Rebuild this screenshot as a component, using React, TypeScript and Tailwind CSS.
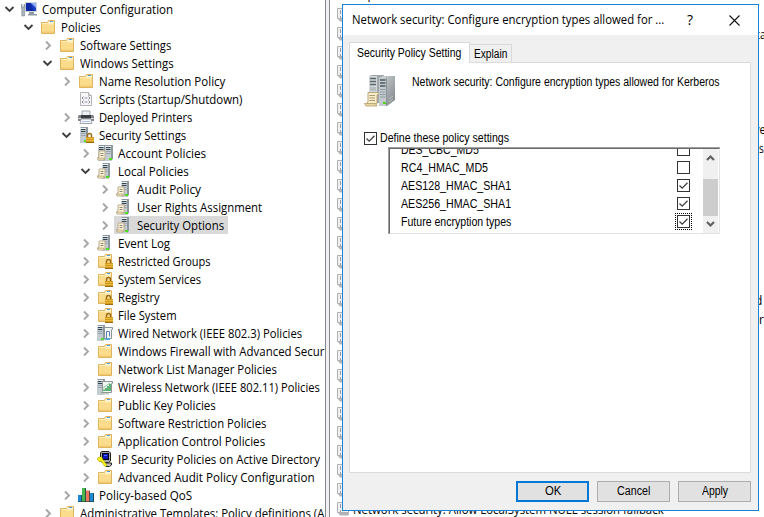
import React, { useLayoutEffect, useRef, useState } from "react";

/** Single-line label condensed or widened horizontally so that it spans `w` pixels. */
function Label({ text, w, className = "" }: { text: string; w: number; className?: string }) {
  const ref = useRef<HTMLSpanElement>(null);
  const [scale, setScale] = useState(1);
  useLayoutEffect(() => {
    if (ref.current) setScale(w / ref.current.offsetWidth);
  }, [text, w]);
  return (
    <span className={`block shrink-0 ${className}`} style={{ width: w }}>
      <span ref={ref} className="inline-block origin-left whitespace-pre" style={{ transform: `scaleX(${scale})` }}>
        {text}
      </span>
    </span>
  );
}

type IconName =
  | "computer" | "folder" | "script" | "printer" | "serverLock" | "serverPair" | "server"
  | "folderLock" | "wired" | "wireless" | "ipsec" | "qos";

const Padlock = () => (
  <g>
    <path d="M9.5 11V8.5a2 2 0 0 1 4 0V11" fill="none" stroke="#9a6c1c" strokeWidth="1.5" />
    <rect x="8" y="10" width="8" height="6" fill="#cf9a1c" />
    <path d="M8 11.5h8M8 13.5h8" stroke="#e9b93e" strokeWidth="1" />
    <path d="M8 15.5h8" stroke="#9d6c0c" strokeWidth="1" />
  </g>
);

const FolderShape = () => (
  <g>
    <path d="M1.5 3.5h6l1-2h6v13h-13z" fill="#fbdc8c" stroke="#dfb45c" />
    <path d="M8.500 2.500h5.500v2H8z" fill="#fff7dc" />
    <rect x="10" y="2" width="3" height="1" fill="#4f9edb" />
    <path d="M2 4.500h5.500l1 .500H14" fill="none" stroke="#fff0bf" />
    <path d="M2 12.500h12v1.500H2z" fill="#f4cb72" />
  </g>
);

const Tower = ({ x = 5 }: { x?: number }) => (
  <g transform={`translate(${x} 0)`}>
    <path d="M0 1l1-1h7v14l-2 2H0z" fill="#8e999f" />
    <path d="M0 1h6v15H0z" fill="#c3ccd1" />
    <path d="M0 1.500h6" stroke="#eef3f5" />
    <path d="M1 2.500h4.500M1 4.500h4.500" stroke="#37434b" />
    <path d="M1 6.500h4.500M1 8.500h4.500" stroke="#98a4ab" />
    <rect x="4" y="13" width="3" height="2" fill="#4be01c" />
  </g>
);

const Scroll = () => (
  <g>
    <path d="M2 6h6v8H1v-2h1z" fill="#fff3d8" stroke="#b5a688" strokeWidth=".9" />
    <path d="M3.500 8.500h3M3.500 10.500h3" stroke="#8b8878" />
    <path d="M.500 13h6l1 2H1z" fill="#f2e3b8" stroke="#a99b77" strokeWidth=".7" />
  </g>
);

function Icon({ name }: { name: IconName }) {
  return (
    <svg width="16" height="16" viewBox="0 0 16 16" className="shrink-0">
      {name === "folder" && <FolderShape />}
      {name === "folderLock" && (<><FolderShape /><Padlock /></>)}
      {name === "computer" && (
        <g>
          <rect x="4.500" y="1.500" width="11" height="9" fill="#1d3fc4" stroke="#cdd4da" />
          <path d="M10 2h5v5z" fill="#8fb0f6" />
          <path d="M5 2h4l4 8H5z" fill="#0d28a4" />
          <path d="M8 11h5v2h3v1.500H7v-1.500h1z" fill="#8e99a1" />
          <path d="M0 4l1-1v3h2V3l1 1v3L3.500 8v7H.800V8L0 7z" fill="#aab5bc" stroke="#6c7980" strokeWidth=".5" />
        </g>
      )}
      {name === "script" && (
        <g>
          <path d="M2.500 1.500h8l3 3v10h-11z" fill="#f7f7f8" stroke="#b3b3b8" />
          <path d="M10.500 1.500v3h3" fill="#ddd" stroke="#b3b3b8" />
          <path d="M5.500 5.500l-1.500 1.500 1.500 1.500M10.500 5.500l1.500 1.500-1.500 1.500M5.500 9.500l-1.500 1.500 1.500 1.500M10.500 9.500l1.500 1.500-1.500 1.500" fill="none" stroke="#66666e" strokeWidth=".8" />
          <path d="M6.500 7h3M6.500 11h3" stroke="#7b6fa0" strokeWidth=".8" />
        </g>
      )}
      {name === "printer" && (
        <g>
          <path d="M4 2h8v5H4z" fill="#eef2f5" stroke="#8e949a" strokeWidth=".8" />
          <path d="M1 6h14l1 1v5H0V7z" fill="#808388" />
          <path d="M3 6h10v3H3z" fill="#3a3d41" />
          <path d="M0 9.500h3M13 9.500h3" stroke="#d0d3d6" />
          <path d="M3 10h10l1 4.500H2z" fill="#f5f7fa" stroke="#8d9298" strokeWidth=".8" />
          <path d="M4 12.500h8" stroke="#a9c6ee" />
        </g>
      )}
      {name === "serverLock" && (<><Tower x={2} /><Padlock /></>)}
      {name === "serverPair" && (<><Tower x={1} /><Tower x={8} /><Scroll /></>)}
      {name === "server" && (<><Tower x={5} /><Scroll /></>)}
      {name === "wired" && (
        <g>
          <Tower x={0} />
          <path d="M5.500 2.500h10v2h-1v9h-8l1-1v-9z" fill="#f4f6f4" stroke="#8f9698" />
          <path d="M9.500 13V6.500h3v5" fill="none" stroke="#5d7fae" />
          <path d="M8 13h5v2H8z" fill="#56a8d8" />
        </g>
      )}
      {name === "wireless" && (
        <g>
          <Tower x={0} />
          <path d="M4.500 2.500h11v2h-1v9h-10l1-1v-9z" fill="#f2f6f2" stroke="#8f9698" />
          <path d="M7 12V10.500M9 12V9M11 12V7M13 12V5" stroke="#2b9b4c" strokeWidth="1.500" />
          <path d="M6 9l7-5" stroke="#6fbf87" strokeWidth=".8" />
          <path d="M3 14h9v1.500H3z" fill="#c3cbc6" />
        </g>
      )}
      {name === "ipsec" && (
        <g>
          <path d="M3.500 1.500l1.500-1h7l1.500 1.500v8l-2 1.500H5L3.500 10z" fill="#a7a7b0" stroke="#222" />
          <rect x="5.500" y="2.500" width="6" height="6" fill="#0a17b8" stroke="#000" />
          <path d="M7 4.500h3" stroke="#4e75ff" />
          <path d="M8 12h6.500v2l-2 1.500H9z" fill="#bdbdbd" stroke="#222" />
          <path d="M0 8l2-2h3l.500 2 4.500 6-1 1.500-1.500-.500-3.500-5-1.500 1z" fill="#f6ef12" stroke="#a19b00" strokeWidth=".5" />
        </g>
      )}
      {name === "qos" && (
        <g>
          <path d="M0 8h4v7H0z" fill="#1f8ad4" />
          <path d="M4 1h4v14H4z" fill="#49b54a" />
          <path d="M8 3.500h4V15H8z" fill="#f0745e" />
          <path d="M12 6h4v9h-4z" fill="#1f8ad4" />
          <path d="M3.500 8v7M7.500 1v14M11.500 4v11M15.500 6v9" stroke="#163a3c" strokeOpacity=".75" />
          <path d="M0 14.500h16" stroke="#163a3c" strokeOpacity=".6" />
        </g>
      )}
    </svg>
  );
}

type Row = { d: number; icon: IconName; text: string; w: number; open?: boolean; leaf?: boolean; selected?: boolean };

const rows: Row[] = [
  { d: 0, icon: "computer", text: "Computer Configuration", w: 131, open: true },
  { d: 1, icon: "folder", text: "Policies", w: 40, open: true },
  { d: 2, icon: "folder", text: "Software Settings", w: 91 },
  { d: 2, icon: "folder", text: "Windows Settings", w: 94, open: true },
  { d: 3, icon: "folder", text: "Name Resolution Policy", w: 126 },
  { d: 3, icon: "script", text: "Scripts (Startup/Shutdown)", w: 143, leaf: true },
  { d: 3, icon: "printer", text: "Deployed Printers", w: 93 },
  { d: 3, icon: "serverLock", text: "Security Settings", w: 87, open: true },
  { d: 4, icon: "serverPair", text: "Account Policies", w: 88 },
  { d: 4, icon: "server", text: "Local Policies", w: 71, open: true },
  { d: 5, icon: "server", text: "Audit Policy", w: 64 },
  { d: 5, icon: "server", text: "User Rights Assignment", w: 125 },
  { d: 5, icon: "server", text: "Security Options", w: 87, selected: true },
  { d: 4, icon: "server", text: "Event Log", w: 52 },
  { d: 4, icon: "folderLock", text: "Restricted Groups", w: 93 },
  { d: 4, icon: "folderLock", text: "System Services", w: 83 },
  { d: 4, icon: "folderLock", text: "Registry", w: 42 },
  { d: 4, icon: "folderLock", text: "File System", w: 59 },
  { d: 4, icon: "wired", text: "Wired Network (IEEE 802.3) Policies", w: 184 },
  { d: 4, icon: "folder", text: "Windows Firewall with Advanced Secur", w: 206 },
  { d: 4, icon: "folder", text: "Network List Manager Policies", w: 159, leaf: true },
  { d: 4, icon: "wireless", text: "Wireless Network (IEEE 802.11) Policies", w: 202 },
  { d: 4, icon: "folder", text: "Public Key Policies", w: 98 },
  { d: 4, icon: "folder", text: "Software Restriction Policies", w: 148 },
  { d: 4, icon: "folder", text: "Application Control Policies", w: 147 },
  { d: 4, icon: "ipsec", text: "IP Security Policies on Active Directory", w: 202 },
  { d: 4, icon: "folder", text: "Advanced Audit Policy Configuration", w: 197 },
  { d: 3, icon: "qos", text: "Policy-based QoS", w: 93 },
  { d: 2, icon: "folder", text: "Administrative Templates: Policy definitions (A", w: 244 },
];

function Twisty({ open, leaf }: { open?: boolean; leaf?: boolean }) {
  return (
    <svg width="11" height="10" viewBox="0 0 11 10" className="mr-1.5 shrink-0">
      {!leaf && (open
        ? <path d="M1.500 3l4 4 4-4" fill="none" stroke="#404040" strokeWidth="1.900" />
        : <path d="M4 1.500l4 4-4 4" fill="none" stroke="#a6a6a6" strokeWidth="1.900" />)}
    </svg>
  );
}

const Tree = () => (
  <div className="w-[325px] shrink-0 overflow-hidden bg-white">
    {rows.map((r) => (
      <div key={r.text} className="flex h-[18px] items-center pl-1">
        {Array.from({ length: r.d }, (_, i) => <span key={i} className="w-[19px] shrink-0" />)}
        <Twisty open={r.open} leaf={r.leaf} />
        <div className={`flex h-[18px] shrink-0 items-center pr-1 ${r.selected ? "-ml-0.5 bg-[#d9d9d9] pl-0.5" : ""}`}>
          <Icon name={r.icon} />
          <Label text={r.text} w={r.w} className="ml-[5px] h-5 pt-0.5 leading-[18px]" />
        </div>
      </div>
    ))}
  </div>
);

const listText: Record<number, { text: string; w: number; indent: string }> = {
  1: { text: "ta", w: 10, indent: "ml-[406px]" },
  6: { text: "ve", w: 12, indent: "ml-[404px]" },
  7: { text: "s", w: 5, indent: "ml-[409px]" },
  15: { text: "d", w: 7, indent: "ml-[405px]" },
  16: { text: "r", w: 5, indent: "ml-[409px]" },
  26: { text: "Network security: Allow LocalSystem NULL session fallback", w: 311, indent: "ml-[3px]" },
};

const PolicyList = () => (
  <div className="flex-1 overflow-hidden bg-white pl-[7px]">
    <div className="h-[5px] overflow-hidden pl-4">
      <div className="-mt-[15px] leading-[19px]">Imp</div>
    </div>
    {Array.from({ length: 27 }, (_, i) => {
      const t = listText[i];
      return (
        <div key={i} className="flex h-[19px] items-center">
          <svg width="13" height="14" viewBox="0 0 13 14" className="shrink-0">
            <path d="M.5.500h11v10H.500z" fill="#f1f1f3" stroke="#b0b0b4" />
            <path d="M3.500 2v4M3.500 8v2M6 2.500h3v3H6zM6 7.500h3" fill="none" stroke="#9c9ca2" />
            <path d="M1 11h11v1.500l-1 1H3z" fill="#b4b4b8" />
          </svg>
          {t && <Label text={t.text} w={t.w} className={`h-5 pt-0.5 leading-[18px] ${t.indent}`} />}
        </div>
      );
    })}
  </div>
);

const Check = ({ on = false }: { on?: boolean }) => (
  <svg width="13" height="13" viewBox="0 0 13 13" className="shrink-0">
    <rect x=".5" y=".5" width="12" height="12" fill="#fff" stroke="#333" />
    {on && <path d="M2.500 6.500l2.700 2.700 5.300-5.400" fill="none" stroke="#404040" strokeWidth="1.300" />}
  </svg>
);

const BigServer = () => (
  <svg width="32" height="32" viewBox="0 0 32 32" className="shrink-0">
    <defs>
      <linearGradient id="side" x1="0" y1="0" x2="1" y2="1">
        <stop offset="0" stopColor="#d5d9db" />
        <stop offset="1" stopColor="#7b8286" />
      </linearGradient>
    </defs>
    <path d="M5 1l3-1h12v25l-4 3H5z" fill="#9fa7ab" />
    <path d="M5 1h8v26H5z" fill="#d3d9db" />
    <path d="M6 3.500h6M6 6.500h6M6 9.500h6" stroke="#5c676d" strokeWidth="1.400" />
    <path d="M6 13h6M6 15h6" stroke="#9ba5aa" />
    <path d="M15 3l4-2h12v24l-8 6h-8z" fill="url(#side)" />
    <path d="M15 3h7v28h-7z" fill="#c3cbce" />
    <path d="M16 5h5.500M16 8h5.500M16 11h5.500" stroke="#4f5b61" strokeWidth="1.500" />
    <path d="M16 14.500h5.500M16 17h5.500M16 19.500h5.500M16 22h5.500" stroke="#909ca2" />
    <path d="M22.500 3v28" stroke="#8a9397" />
    <path d="M25 24l4-3M25 27l4-3" stroke="#bcc2c5" />
    <path d="M19 27h3v2h-3z" fill="#50d41e" />
    <path d="M4 17.500h9.500l1.500 1.500-2 1v9H2l2-2z" fill="#f9edc8" stroke="#b9a77e" />
    <path d="M5.500 20.500H11M5.500 23H11M5.500 25.500H11" stroke="#a89a75" />
    <path d="M.5 28.500h11l1.500 2.500H2z" fill="#ead6a1" stroke="#b29e70" strokeWidth=".8" />
  </svg>
);

const options = [
  { text: "DES_CBC_MD5", w: 78, on: false },
  { text: "RC4_HMAC_MD5", w: 87, on: false },
  { text: "AES128_HMAC_SHA1", w: 110, on: true },
  { text: "AES256_HMAC_SHA1", w: 110, on: true },
  { text: "Future encryption types", w: 110, on: true, focus: true },
];

const Arrow = ({ down = false }: { down?: boolean }) => (
  <svg width="15" height="17" viewBox="0 0 15 17" className={`shrink-0 ${down ? "rotate-180" : ""}`}>
    <path d="M4 11l3.500-3.500L11 11" fill="none" stroke="#606060" strokeWidth="2.200" />
  </svg>
);

const DialogButton = ({ text, w, primary = false }: { text: string; w: number; primary?: boolean }) => (
  <button className={`flex h-[21px] w-[73px] items-center justify-center bg-[#e1e1e1] ${primary ? "border-2 border-[#0078d7]" : "border border-[#adadad]"}`}>
    <Label text={text} w={w} className="text-left leading-[17px]" />
  </button>
);

const Dialog = () => (
  <div className="absolute left-[342px] top-1 flex h-[507px] w-[417px] flex-col border border-[#1883d7] bg-[#f0f0f0]">
    <div className="flex h-[30px] shrink-0 items-center bg-white pl-[9px] font-['Open_Sans','Noto_Sans',sans-serif]">
      <Label text="Network security: Configure encryption types allowed for ..." w={312} />
      <span className="ml-[22px] w-2 text-center text-[14px] leading-[18px]">?</span>
      <svg width="11" height="11" viewBox="0 0 11 11" className="ml-[35px]">
        <path d="M.5.500l10 10M10.500.500l-10 10" stroke="#111" strokeWidth="1.100" />
      </svg>
    </div>
    <div className="flex h-[27px] shrink-0 items-end pl-1.5 pt-[7px]">
      <div className="z-10 -mb-px flex h-[21px] w-[121px] items-center border border-b-0 border-[#d9d9d9] bg-white pl-[7px]">
        <Label text="Security Policy Setting" w={104} className="leading-[18px]" />
      </div>
      <div className="-ml-px flex h-[18px] w-[43px] items-center border border-b-0 border-[#d9d9d9] pl-1">
        <Label text="Explain" w={33} className="leading-4" />
      </div>
    </div>
    <div className="mx-1.5 mr-[7px] h-[411px] shrink-0 border border-[#dcdcdc] bg-white pl-3.5">
      <div className="flex h-[69px] pt-3">
        <BigServer />
        <Label text="Network security: Configure encryption types allowed for Kerberos" w={308} className="ml-4 h-4 leading-[14px]" />
      </div>
      <div className="flex h-[13px] items-center">
        <Check on />
        <Label text="Define these policy settings" w={129} className="ml-[3px] leading-[13px]" />
      </div>
      <div className="ml-6 mt-0.5 h-[87px] w-[332px] border-l border-t border-[#a0a0a0]">
        <div className="flex h-[86px] border border-b-[#e3e3e3] border-l-[#696969] border-r-[#e3e3e3] border-t-[#696969]">
          <div className="flex h-[84px] flex-1 flex-col justify-end overflow-hidden pb-0.5 pl-[11px]">
            {options.map((o) => (
              <div key={o.text} className="flex h-[18px] shrink-0 items-start justify-between pr-[11px]">
                <Label text={o.text} w={o.w} className="leading-[18px]" />
                <span className={`flex h-[17px] w-[17px] items-center justify-center ${o.focus ? "border border-dotted border-black" : ""}`}>
                  <Check on={o.on} />
                </span>
              </div>
            ))}
          </div>
          <div className="mr-px flex w-[15px] flex-col bg-[#f0f0f0]">
            <Arrow />
            <div className="mt-[13px] h-[37px] bg-[#cdcdcd]" />
            <Arrow down />
          </div>
        </div>
      </div>
    </div>
    <div className="mt-2 flex gap-2 pl-[173px]">
      <DialogButton text="OK" w={16} primary />
      <DialogButton text="Cancel" w={33} />
      <DialogButton text="Apply" w={26} />
    </div>
  </div>
);

export default function App() {
  return (
    <div className="relative flex h-[517px] w-[764px] overflow-hidden bg-white font-['Open_Sans','Noto_Sans',sans-serif] text-[12px] text-black">
      <Tree />
      <div className="w-[5px] shrink-0 border-x border-[#828790] bg-[#f0f0f0]" />
      <PolicyList />
      <div className="font-['Liberation_Sans',Arial,sans-serif]">
        <Dialog />
      </div>
    </div>
  );
}
